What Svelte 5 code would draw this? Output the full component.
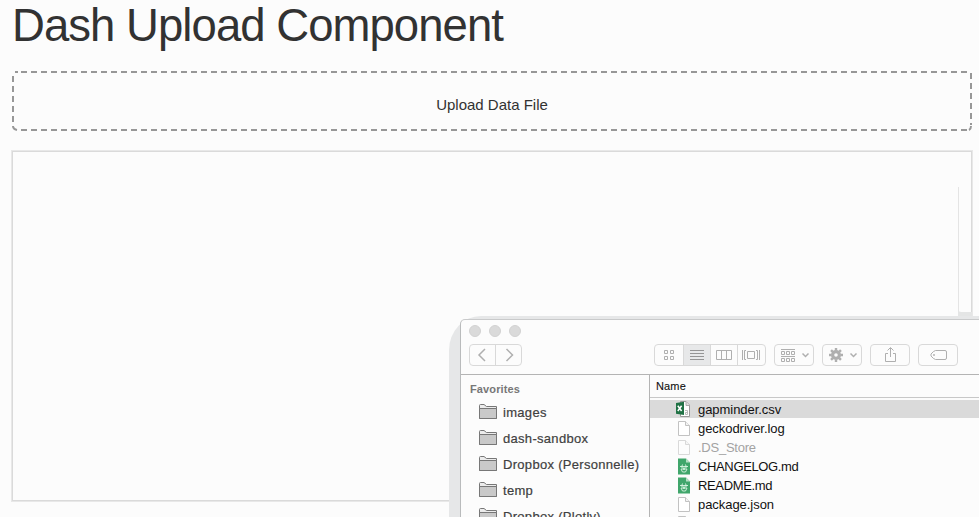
<script>
  const favorites = ['images', 'dash-sandbox', 'Dropbox (Personnelle)', 'temp', 'Dropbox (Plotly)'];
  const files = [
    { name: 'gapminder.csv', kind: 'excel', selected: true },
    { name: 'geckodriver.log', kind: 'plain' },
    { name: '.DS_Store', kind: 'plain', hidden: true },
    { name: 'CHANGELOG.md', kind: 'markdown' },
    { name: 'README.md', kind: 'markdown' },
    { name: 'package.json', kind: 'plain' },
    { name: '', kind: 'plain' }
  ];
  const teeth = [0, 45, 90, 135, 180, 225, 270, 315];
</script>

<main>
  <h1>Dash Upload Component</h1>
  <div class="upload">
    <svg class="outline" width="960" height="60" fill="none" stroke="#979797" stroke-width="2">
      <path d="M3 1H6M9 1H956" stroke-dasharray="6 4" />
      <path d="M9 59H956" stroke-dasharray="6 4" />
      <path d="M1 5V54" stroke-dasharray="6 4" />
      <path d="M959 2V54" stroke-dasharray="6 4" />
      <path d="M1 55Q1 58 5 59M957 59Q959 58 959 55" />
    </svg>
    <span>Upload Data File</span>
  </div>
  <div class="output"></div>

  <div class="trail"></div>
  <div class="smudge"></div>
  <div class="shadow"></div>

  <section class="window">
    <header>
      <div class="lights"><i></i><i></i><i></i></div>
      <div class="tools">
        <div class="group nav">
          <span><svg width="25" height="20"><path d="M15 4L9 10L15 16" stroke-width="1.5" /></svg></span>
          <span><svg width="25" height="20"><path d="M10.500 4L16.500 10L10.500 16" stroke-width="1.5" /></svg></span>
        </div>
        <div class="group views">
          <span>
            <svg width="28" height="20">
              <path d="M9.500 5.500h3v3h-3zM15.500 5.500h3v3h-3zM9.500 11.500h3v3h-3zM15.500 11.500h3v3h-3z" />
            </svg>
          </span>
          <span class="active"><svg width="26" height="20"><path d="M6 5.500H20M6 8.500H20M6 11.500H20M6 14.500H20" stroke="#959595" /></svg></span>
          <span><svg width="26" height="20"><path d="M5.500 5.500h15v9h-15zM10.500 5.500v9M15.500 5.500v9" /></svg></span>
          <span>
            <svg width="27" height="20">
              <path d="M9.500 6.500h7v7h-7zM4.500 5v10M8 5.500h-1.500v9h1.500M18 5.500h1.500v9h-1.500M21.500 5v10" />
            </svg>
          </span>
        </div>
        <div class="group single">
          <svg width="38" height="20">
            <path d="M6 4.500H20M6 11.500H20M6.500 6.500h3v3h-3zM11.500 6.500h3v3h-3zM16.500 6.500h3v3h-3zM6.500 13.500h3v3h-3zM11.500 13.500h3v3h-3zM16.500 13.500h3v3h-3z" />
            <path d="M27.500 8.500L30.500 11.500L33.500 8.500" stroke-width="1.500" />
          </svg>
        </div>
        <div class="group single">
          <svg width="38" height="20">
            <g transform="translate(13 10)">
              <circle r="3.400" stroke-width="3.200" />
              {#each teeth as angle}
                <path d="M0 -4.500V-7" stroke-width="2.400" transform={`rotate(${angle})`} />
              {/each}
            </g>
            <path d="M27.500 8.500L30.500 11.500L33.500 8.500" stroke-width="1.500" />
          </svg>
        </div>
        <div class="group single">
          <svg width="38" height="20"><path d="M17 8.500H14.500V16.500H24.500V8.500H22M19.500 12V3M16.500 5.500L19.500 2.500L22.500 5.500" /></svg>
        </div>
        <div class="group single">
          <svg width="38" height="20">
            <path d="M16.500 5.500H26Q27.500 5.500 27.500 7V13Q27.500 14.500 26 14.500H16.500Q14.500 14 12 11V9Q14.500 6 16.500 5.500Z" />
            <circle cx="15" cy="10" r=".6" />
          </svg>
        </div>
      </div>
    </header>
    <div class="body">
      <aside>
        <h2>Favorites</h2>
        {#each favorites as name}
          <div class="favorite">
            <svg width="18" height="15" fill="#ececec" stroke="#777">
              <path d="M.5 14.500V1.500Q.5 .5 1.500 .5H5L7.500 2.500H17.500V14.500Z" />
              <path d="M.5 4.500H17.500V14.500H.5Z" fill="#c9c9c9" />
            </svg>
            <span>{name}</span>
          </div>
        {/each}
      </aside>
      <div class="list">
        <div class="heading">Name</div>
        {#each files as file}
          <div class="file" class:selected={file.selected} class:hidden={file.hidden} class:caps={file.kind === 'markdown'}>
            <svg width="16" height="17" viewBox="0 0 16 17">
              {#if file.kind === 'excel'}
                <path d="M5.500 .5H11L14.500 4V15.500H5.500Z" fill="#fff" stroke="#999" />
                <path d="M11 .5V4.500H14.500" fill="#ddd" stroke="#aaa" />
                <path d="M10 9.500h2.500v4H10.500v-2H12.500" fill="none" stroke="#bbb" />
                <path d="M1 2L9 .8V14L1 12.800Z" fill="#207245" />
                <path d="M2.800 4.800L6.600 10M6.600 4.800L2.800 10" stroke="#fff" stroke-width="1.500" />
              {:else if file.kind === 'markdown'}
                <path d="M3 .5H11L15 4.500V16.500H3Z" fill="#40a66b" />
                <path d="M11 .5V4.500H15Z" fill="#b5dfc4" />
                <path d="M5 8.500h8M6 11h6M7.500 6.500L6.500 9.500M10.500 6.500L11.500 9.500M6 11l1.500 3h3L12 11M7.500 8.500L9 12l1.500-3.500" fill="none" stroke="#d9f4e2" stroke-width=".9" />
              {:else}
                <path d="M3.500 1.500H10.500L14.500 5.500V15.500H3.500Z" fill="#fff" stroke="#c2c2c2" />
                <path d="M10.500 1.500V5.500H14.500" fill="#f3f3f3" stroke="#c2c2c2" />
              {/if}
            </svg>
            <span>{file.name}</span>
          </div>
        {/each}
      </div>
    </div>
  </section>
</main>

<style>
  :global(body) { margin: 0; background: #fcfcfc; }
  main {
    position: relative;
    box-sizing: border-box;
    width: 979px;
    height: 517px;
    padding-left: 12px;
    overflow: hidden;
    background: #fcfcfc;
    color: #323232;
    font-family: "Liberation Sans", Arial, sans-serif;
  }
  svg { display: block; flex: none; }
  h1 {
    margin: 0;
    height: 71px;
    font-size: 45.500px;
    font-weight: 400;
    line-height: 51px;
    letter-spacing: -.95px;
    white-space: nowrap;
  }
  .upload {
    position: relative;
    width: 960px;
    height: 60px;
    font-size: 15px;
    line-height: 67px;
    text-align: center;
  }
  .outline { position: absolute; inset: 0; }
  .output {
    box-sizing: border-box;
    width: 962px;
    height: 352px;
    margin: 19px 0 0 -1px;
    border: 1px solid #e8e8e8;
    box-shadow: inset 0 0 0 1px #dadada;
  }
  .trail { position: absolute; left: 958px; top: 187px; width: 1px; height: 132px; background: #e4e4e4; }
  .smudge {
    position: absolute;
    left: 958px;
    top: 311px;
    width: 14px;
    height: 8px;
    background: #e4e5e5;
    clip-path: polygon(0 0, 3px 1px, 14px 1px, 14px 8px, 0 8px);
  }
  .shadow {
    position: absolute;
    left: 449px;
    top: 316px;
    width: 540px;
    height: 210px;
    border-radius: 32px 0 0 0 / 34px 0 0 0;
    background: #e6e7e8;
  }
  .window {
    position: absolute;
    left: 460px;
    top: 319px;
    box-sizing: border-box;
    width: 530px;
    height: 210px;
    border: 1px solid #b9bbbc;
    border-top-color: #c9cacb;
    border-radius: 5px 0 0 0;
    background: #fcfcfc;
    overflow: hidden;
  }
  header { box-sizing: border-box; height: 55px; border-bottom: 1px solid #b4b4b4; }
  .lights { display: flex; gap: 8px; padding: 5px 0 0 8px; }
  .lights i { box-sizing: border-box; width: 12px; height: 12px; border: 1px solid #d2d2d2; border-radius: 50%; background: #dadada; }
  .tools { display: flex; padding: 7px 0 0 8px; }
  .group {
    box-sizing: border-box;
    display: flex;
    height: 22px;
    border: 1px solid #d9d9d9;
    border-radius: 4px;
    overflow: hidden;
  }
  .group svg { fill: none; stroke: #afafaf; }
  .group span + span { border-left: 1px solid #d9d9d9; }
  .nav { width: 53px; }
  .views { width: 112px; margin-left: 132px; }
  .active { background: #e7e8e9; }
  .single { width: 40px; margin-left: 8px; }
  .body { display: flex; height: 154px; }
  aside { box-sizing: border-box; width: 189px; border-right: 1px solid #b4b4b4; }
  h2 {
    margin: 0;
    padding: 7px 0 0 9px;
    height: 17px;
    color: #777;
    font-size: 11px;
    line-height: 15px;
    letter-spacing: .13px;
  }
  .favorite {
    display: flex;
    align-items: center;
    gap: 6px;
    height: 26px;
    padding-left: 18px;
    color: #404040;
    font-size: 13px;
    letter-spacing: .3px;
    white-space: nowrap;
    -webkit-text-stroke: .2px #404040;
  }
  .favorite svg { position: relative; top: -1px; }
  .list { flex: 1; color: #111; }
  .heading {
    box-sizing: border-box;
    height: 23px;
    margin-bottom: 2px;
    padding-left: 6px;
    border-bottom: 1px solid #c8c8c8;
    font-size: 11px;
    line-height: 22px;
    letter-spacing: .15px;
    -webkit-text-stroke: .1px #111;
  }
  .file {
    display: flex;
    align-items: center;
    gap: 7px;
    height: 19px;
    padding-left: 25px;
    font-size: 13px;
    letter-spacing: -.05px;
  }
  .selected { background: linear-gradient(#dadada 18px, transparent 18px); }
  .hidden { color: #a3a3a3; letter-spacing: -.25px; }
  .caps { letter-spacing: -.36px; }
  .hidden svg { opacity: .6; }
</style>
